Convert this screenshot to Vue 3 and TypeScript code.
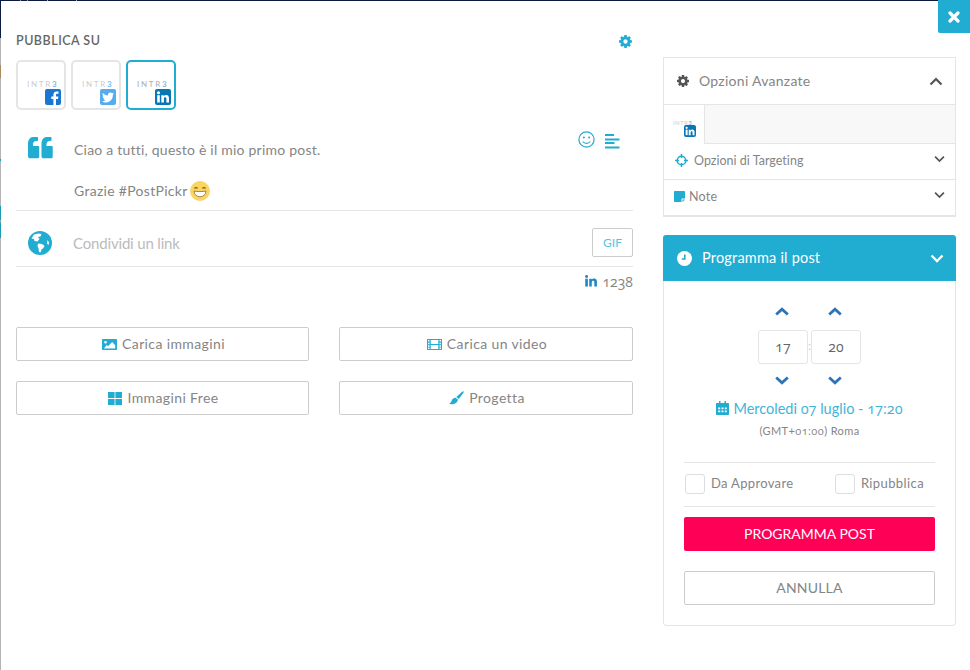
<script setup lang="ts">
const gear = 'M1152 896q0-106-75-181t-181-75-181 75-75 181 75 181 181 75 181-75 75-181zm512-109v222q0 12-8 23t-20 13l-185 28q-19 54-39 91 35 50 107 138 10 12 10 25t-9 23q-27 37-99 108t-94 71q-12 0-26-9l-138-108q-44 23-91 38-16 136-29 186-7 28-36 28h-222q-14 0-24.5-8.5t-11.5-21.5l-28-184q-49-16-90-37l-141 107q-10 9-25 9-14 0-25-11-126-114-165-168-7-10-7-23 0-12 8-23 15-21 51-66.5t54-70.5q-27-50-41-99l-183-27q-13-2-21-12.5t-8-23.5v-222q0-12 8-23t19-13l186-28q14-46 39-92-40-57-107-138-10-12-10-24 0-10 9-23 26-36 98.5-107.5t94.5-71.5q13 0 26 10l138 107q44-23 91-38 16-136 29-186 7-28 36-28h222q14 0 24.5 8.5t11.5 21.5l28 184q49 16 90 37l142-107q9-9 24-9 13 0 25 10 129 119 165 170 7 8 7 22 0 12-8 23-15 21-51 66.5t-54 70.5q26 50 41 98l183 28q13 2 21 12.5t8 23.5z'
const accounts = [
  { id: 'fb', active: false },
  { id: 'tw', active: false },
  { id: 'li', active: true },
]
const timeParts = ['17', '20']
</script>

<template>
  <div class="page">
    <div class="modal">
      <button class="close" aria-label="Chiudi">
        <svg width="12" height="12" viewBox="0 0 12 12"><path d="M2 2l8 8M10 2l-8 8" stroke="#fff" stroke-width="3.200" stroke-linecap="round" /></svg>
      </button>

      <section class="left">
        <div class="head">
          <span class="head-title">PUBBLICA SU</span>
          <svg width="15" height="15" viewBox="0 0 1792 1792"><path :d="gear" fill="#21acd2" /></svg>
        </div>

        <div class="accounts">
          <div v-for="a in accounts" :key="a.id" class="thumb" :class="{ on: a.active }">
            <span class="logo">INTR<b>3</b></span>
            <span class="badge" :class="a.id">
              <svg v-if="a.id === 'fb'" viewBox="0 0 16 16"><path d="M11 16V10h2l.4-2.500H11V6c0-.8.3-1.200 1.200-1.200h1.300V2.500c-.4 0-1.100-.1-1.900-.1-2 0-3.200 1.200-3.200 3.300v1.800H6.300V10h2.100v6z" fill="#fff" /></svg>
              <svg v-else-if="a.id === 'tw'" viewBox="0 0 16 16"><path d="M14 4.600c-.5.2-1 .3-1.400.4.5-.3.9-.8 1.100-1.400-.5.3-1 .5-1.600.6a2.500 2.500 0 0 0-4.200 2.300C5.900 6.400 4.100 5.400 2.900 3.900c-.7 1.200-.3 2.600.8 3.300-.4 0-.8-.1-1.100-.3 0 1.200.9 2.300 2 2.500-.4.100-.8.100-1.100 0 .3 1 1.200 1.700 2.300 1.700A5 5 0 0 1 2 12.200a7 7 0 0 0 10.800-6.300c.5-.3.9-.8 1.200-1.300z" fill="#fff" /></svg>
              <svg v-else viewBox="0 0 16 16"><rect x="2.200" y="6.200" width="2.600" height="7.300" fill="#fff" /><circle cx="3.500" cy="3.800" r="1.500" fill="#fff" /><path d="M6.300 6.200h2.500v1c.5-.8 1.300-1.200 2.300-1.200 2 0 2.900 1.200 2.900 3.300v4.200h-2.600V9.800c0-1-.4-1.600-1.200-1.600-.9 0-1.300.6-1.300 1.600v3.700H6.300z" fill="#fff" /></svg>
            </span>
          </div>
        </div>

        <div class="editor">
          <div class="quote-col">
            <svg width="25" height="22" viewBox="0 0 25 22"><path d="M5 0h4c.6 0 1 .4 1 1v2c0 .6-.4 1-1 1H8C6 4 5 5.300 5 7.500V9h5c.8 0 1.200.4 1.200 1.200v9.600c0 1-.4 1.400-1.200 1.400H2c-1 0-2-.6-2-1.800V7C0 3 2 0 5 0zM18.500 0h4c.6 0 1 .4 1 1v2c0 .6-.4 1-1 1h-1c-2 0-3 1.300-3 3.500V9h5c.8 0 1.200.4 1.200 1.200v9.600c0 1-.4 1.400-1.200 1.400h-8c-1 0-2-.6-2-1.800V7c0-4 2-7 5-7z" fill="#21acd2" /></svg>
          </div>
          <div class="post">
            <p class="greet">Ciao a tutti, questo è il mio primo post.</p>
            <p class="thanks">Grazie #PostPickr<svg class="emoji" width="20" height="20" viewBox="0 0 20 20"><circle cx="10" cy="10" r="10" fill="#fbd561" /><path d="M4 10c3.800.8 8.200.8 12 0-.2 3.600-2.800 5.800-6 5.800S4.200 13.600 4 10z" fill="#fff" stroke="#8a6a3a" stroke-width=".8" /><path d="M4.500 7.500c.7-1.300 2.300-1.300 3 0M12.500 7.500c.7-1.300 2.300-1.300 3 0" fill="none" stroke="#7a5b2a" stroke-width="1.200" /></svg></p>
          </div>
          <div class="tools">
            <svg width="17" height="17" viewBox="0 0 17 17"><circle cx="8.500" cy="8.500" r="7.600" fill="none" stroke="#21acd2" stroke-width="1.200" /><circle cx="5.900" cy="6.600" r="1" fill="#21acd2" /><circle cx="11.100" cy="6.600" r="1" fill="#21acd2" /><path d="M4.700 10.500c1.800 2.500 5.800 2.500 7.600 0" fill="none" stroke="#21acd2" stroke-width="1.100" /></svg>
            <svg class="align" width="15" height="15" viewBox="0 0 15 15"><path d="M0 1h9M0 5.500h14.500M0 9h9.500M0 13.500h14.500" stroke="#21acd2" stroke-width="2" /></svg>
          </div>
        </div>

        <div class="link-row">
          <svg class="globe" width="24" height="24" viewBox="0 0 24 24"><circle cx="12" cy="12" r="12" fill="#21acd2" /><path d="M6 3.500l4.500-1 3 .5-1 2.500-2.500.5 1.500 2-2 2.500-3-.5-.5-2-2.500-.5zM10 12.500l4 .5 2.500 2-1.500 2.500-1.500 1-1 3-1.500-.5-.5-3.500-1-2.500zM19.500 9l1.500 2.500-.5 2.500-1.500-1.500z" fill="#fff" /></svg>
          <span class="placeholder">Condividi un link</span>
          <button class="gif">GIF</button>
        </div>

        <div class="count">
          <svg width="12" height="12" viewBox="0 0 13 13"><rect x=".3" y="4" width="2.800" height="8.500" fill="#1d86c4" /><circle cx="1.700" cy="1.700" r="1.600" fill="#1d86c4" /><path d="M4.600 4h2.700v1.200C7.800 4.300 8.700 3.800 9.800 3.800c2.300 0 3.100 1.400 3.100 3.800v4.900H10.100V8.100c0-1.100-.4-1.800-1.300-1.800-1 0-1.500.7-1.500 1.800v4.400H4.600z" fill="#1d86c4" /></svg>
          <span class="num">1238</span>
        </div>

        <div class="actions">
          <button class="btn">
            <svg width="15" height="11" viewBox="0 0 15 11"><path fill-rule="evenodd" d="M1 0h13c.6 0 1 .4 1 1v9c0 .6-.4 1-1 1H1c-.6 0-1-.4-1-1V1c0-.6.4-1 1-1zm2.500 2A1.300 1.300 0 1 0 3.500 4.600 1.300 1.300 0 0 0 3.500 2zM2 9.500h11.200V6.200L10.200 3 6 7.300 4.600 5.900z" fill="#21acd2" /></svg>
            <span class="btn-text">Carica immagini</span>
          </button>
          <button class="btn">
            <svg width="15" height="11" viewBox="0 0 15 11"><path fill-rule="evenodd" d="M.5 0h14c.3 0 .5.200.5.500v10c0 .3-.2.500-.5.500H.5c-.3 0-.5-.2-.5-.5V.500C0 .2.200 0 .5 0zM1 1v1.500h1.500V1zm0 2.700v1.500h1.500V3.700zm0 2.600v1.500h1.500V6.300zM1 8.500V10h1.500V8.500zM12.500 1v1.500H14V1zm0 2.700v1.500H14V3.700zm0 2.600v1.500H14V6.300zm0 2.200V10H14V8.500zM3.700 1v4h7.600V1zm0 5v4h7.600V6z" fill="#21acd2" /></svg>
            <span class="btn-text">Carica un video</span>
          </button>
          <button class="btn">
            <svg width="14" height="13" viewBox="0 0 14 13"><path d="M0 0h6.600v6H0zM7.400 0H14v6H7.400zM0 6.900h6.600V13H0zM7.400 6.900H14V13H7.400z" fill="#21acd2" /></svg>
            <span class="btn-text">Immagini Free</span>
          </button>
          <button class="btn">
            <svg width="15" height="15" viewBox="0 0 15 15"><path d="M14.500.5c.4.300.3.900-.2 1.600L9.800 8 7.300 6 12.800.9c.6-.5 1.300-.7 1.700-.4zM6.700 6.800l2.300 1.900c-.5 2.600-3 4.300-5.300 4.500C2.300 13.400.8 13 .2 12.300c1.400-.2 2-1 2.300-2.200.4-1.700 2-3.200 4.200-3.300z" fill="#21acd2" /></svg>
            <span class="btn-text">Progetta</span>
          </button>
        </div>
      </section>

      <aside class="right">
        <div class="panel options">
          <div class="opt-head">
            <svg width="14" height="14" viewBox="0 0 1792 1792"><path :d="gear" fill="#555" /></svg>
            <span class="opt-title">Opzioni Avanzate</span>
            <svg class="chev-head" width="14" height="9" viewBox="0 0 14 9"><path d="M1.500 7.500L7 2l5.500 5.500" fill="none" stroke="#555" stroke-width="2.200" /></svg>
          </div>
          <div class="tabs">
            <div class="tab">
              <span class="logo tiny">INTR<b>3</b></span>
              <span class="badge li small">
                <svg viewBox="0 0 16 16"><rect x="2.200" y="6.200" width="2.600" height="7.300" fill="#fff" /><circle cx="3.500" cy="3.800" r="1.500" fill="#fff" /><path d="M6.300 6.200h2.500v1c.5-.8 1.300-1.200 2.300-1.200 2 0 2.900 1.200 2.900 3.300v4.200h-2.600V9.800c0-1-.4-1.600-1.200-1.600-.9 0-1.300.6-1.300 1.600v3.700H6.300z" fill="#fff" /></svg>
              </span>
            </div>
          </div>
          <div class="opt-row first">
            <svg width="13" height="13" viewBox="0 0 13 13"><circle cx="6.500" cy="6.500" r="4.300" fill="none" stroke="#21acd2" stroke-width="1.500" /><path d="M6.500 0v4M6.500 9v4M0 6.500h4M9 6.500h4" stroke="#21acd2" stroke-width="1.500" /></svg>
            <span>Opzioni di Targeting</span>
            <svg class="chev-row" width="11" height="8" viewBox="0 0 12 8"><path d="M1.200 1.500L6 6.200l4.800-4.700" fill="none" stroke="#555" stroke-width="1.900" /></svg>
          </div>
          <div class="opt-row note">
            <svg width="11" height="11" viewBox="0 0 11 11"><path d="M1 0h9c.6 0 1 .4 1 1v6.500H8.500c-.6 0-1 .4-1 1V11H1c-.6 0-1-.4-1-1V1c0-.6.4-1 1-1zM8.500 8.500H11L8.500 11z" fill="#21acd2" /></svg>
            <span>Note</span>
            <svg class="chev-row" width="11" height="8" viewBox="0 0 12 8"><path d="M1.200 1.500L6 6.200l4.800-4.700" fill="none" stroke="#555" stroke-width="1.900" /></svg>
          </div>
        </div>

        <div class="schedule">
          <div class="sched-head">
            <svg width="15" height="15" viewBox="0 0 15 15"><circle cx="7.500" cy="7.500" r="7.500" fill="#fff" /><path d="M7.800 3.500v4.500H4.800" fill="none" stroke="#21acd2" stroke-width="1.600" /></svg>
            <span class="sched-title">Programma il post</span>
            <svg class="chev-head" width="14" height="9" viewBox="0 0 14 9"><path d="M1.500 1.500L7 7l5.500-5.500" fill="none" stroke="#fff" stroke-width="2.400" /></svg>
          </div>
          <div class="sched-body">
            <div class="time">
              <template v-for="(t, i) in timeParts" :key="t">
                <span v-if="i === 1" class="colon">:</span>
                <div class="time-col">
                  <svg width="14" height="14" viewBox="0 0 14 14"><path d="M1.200 9.500L7 4.200l5.800 5.300" fill="none" stroke="#2e73b8" stroke-width="2.800" /></svg>
                  <div class="time-box"><span class="num">{{ t }}</span></div>
                  <svg width="14" height="14" viewBox="0 0 14 14"><path d="M1.200 4.500L7 9.800l5.800-5.300" fill="none" stroke="#2e73b8" stroke-width="2.800" /></svg>
                </div>
              </template>
            </div>
            <div class="date">
              <svg width="13" height="14" viewBox="0 0 13 14"><path fill-rule="evenodd" d="M3 0h1.500v2h4V0H10v2h2c.6 0 1 .4 1 1v10c0 .6-.4 1-1 1H1c-.6 0-1-.4-1-1V3c0-.6.4-1 1-1h2zM2.200 6.500v1.700h2V6.500zm3.300 0v1.700h2V6.500zm3.300 0v1.700h2V6.500zM2.200 9.500v1.700h2V9.500zm3.300 0v1.700h2V9.500zm3.300 0v1.700h2V9.500z" fill="#21acd2" /></svg>
              <span>Mercoledi <span class="num">07</span> luglio - <span class="num">17:20</span></span>
            </div>
            <div class="zone">(GMT+<span class="num">01:00</span>) Roma</div>
            <div class="checks">
              <label class="check"><span class="box"></span><span class="check-text">Da Approvare</span></label>
              <label class="check"><span class="box"></span><span class="check-text">Ripubblica</span></label>
            </div>
            <button class="primary">PROGRAMMA POST</button>
            <button class="cancel">ANNULLA</button>
          </div>
        </div>
      </aside>
    </div>
  </div>
</template>

<style>
html, body { margin: 0; background: #fff; }
</style>

<style scoped>
* { box-sizing: border-box; }
.page {
  width: 970px;
  height: 670px;
  overflow: hidden;
  padding: 1px 0 0 1px;
  font-family: Lato, "Open Sans", sans-serif;
  color: #666;
  background:
    linear-gradient(90deg, #0c1a40 0, #0c1a40 20px, #999 20px, #999 21px, #0c1a40 21px, #0c1a40 27px, #999 27px, #999 28px, #0c1a40 28px, #0c1a40 47px, #aaa 47px, #aaa 48px, #0c1a40 48px, #0c1a40 76px, #aaa 76px, #aaa 77px, #0c1a40 77px) top / 100% 1px no-repeat,
    linear-gradient(180deg, #0c1a40 0, #0c1a40 38px, #b4b4b4 38px, #b4b4b4 65px, #a98a5c 65px, #a98a5c 78px, #b4b4b4 78px, #b4b4b4 159px, #1a9bb0 159px, #1a9bb0 161px, #b4b4b4 161px, #b4b4b4 206px, #1a9bb0 206px, #1a9bb0 220px, #b4b4b4 220px, #1a9bb0 224px, #1a9bb0 238px, #b4b4b4 238px) left / 1px 100% no-repeat,
    #fff;
}
.num { font-family: "Open Sans", sans-serif; font-feature-settings: "onum" 1; font-variant-numeric: oldstyle-nums; }
.modal {
  position: relative;
  display: flex;
  gap: 30px;
  height: 669px;
  padding: 31px 0 0 15px;
  background: #fff;
}
.close {
  position: absolute;
  top: -1px;
  right: 0;
  width: 32px;
  height: 33px;
  border: 0;
  border-bottom-left-radius: 2px;
  background: #21acd2;
  display: flex;
  align-items: center;
  justify-content: center;
  padding: 0;
}
.left { width: 617px; }
.head {
  display: flex;
  align-items: center;
  justify-content: space-between;
  height: 18px;
  margin-bottom: 10px;
}
.head-title { font-size: 12.5px; font-weight: 600; color: #666; letter-spacing: 0.5px; margin-top: -2px; }
.accounts { display: flex; gap: 5px; }
.thumb {
  position: relative;
  width: 50px;
  height: 50px;
  border: 2px solid #e5e5e5;
  border-radius: 5px;
  background: #fff;
}
.thumb.on { border-color: #21acd2; }
.logo {
  position: absolute;
  left: 9px;
  top: 18px;
  font-size: 8px;
  line-height: 9px;
  letter-spacing: 1.7px;
  font-weight: 400;
  color: #c9cdd2;
  white-space: nowrap;
}
.logo b { color: #7fbde8; font-weight: 700; }
.thumb.on .logo { color: #a9aeb3; }
.logo.tiny { left: 9px; top: 14px; font-size: 6px; letter-spacing: 0.4px; line-height: 7px; }
.badge {
  position: absolute;
  right: 3px;
  bottom: 3px;
  width: 16px;
  height: 16px;
  border-radius: 2px;
  overflow: hidden;
  display: block;
}
.badge svg { display: block; width: 100%; height: 100%; }
.badge.fb { background: #1976d2; }
.badge.tw { background: #55acee; }
.badge.li { background: #0a77b5; }
.badge.small { width: 12px; height: 12px; right: 8px; bottom: 7px; }
.editor {
  display: flex;
  height: 101px;
  border-bottom: 1px solid #e5e5e5;
}
.quote-col { width: 58px; padding: 27px 0 0 12px; }
.post { flex: 1; padding-top: 30px; font-size: 14px; line-height: 20px; color: #858585; }
.post p { margin: 0; }
.greet { letter-spacing: 0.22px; }
.post .thanks { margin-top: 21px; display: flex; align-items: center; letter-spacing: 0.3px; }
.emoji { margin-left: 2px; }
.tools { display: flex; align-items: flex-start; gap: 10px; padding: 21px 13px 0 0; }
.align { margin-top: 3px; }
.link-row {
  display: flex;
  align-items: center;
  height: 56px;
  padding: 17px 0 9px;
  border-bottom: 1px solid #e5e5e5;
}
.globe { margin: 0 21px 0 12px; flex: none; }
.placeholder { flex: 1; font-size: 15px; color: #bbb; letter-spacing: -0.17px; }
.gif {
  width: 41px;
  height: 29px;
  border: 1px solid #ccc;
  border-radius: 2px;
  background: #fff;
  color: #55c4e0;
  font: 400 12px Lato, sans-serif;
  padding: 0;
}
.count {
  display: flex;
  align-items: center;
  justify-content: flex-end;
  gap: 5px;
  height: 30px;
  margin-bottom: 30px;
  padding-bottom: 2px;
  font-size: 14px;
  color: #858585;
}
.actions { display: grid; grid-template-columns: 293px 294px; gap: 20px 30px; }
.btn {
  display: flex;
  align-items: center;
  justify-content: center;
  gap: 5px;
  height: 34px;
  border: 1px solid #ccc;
  border-radius: 2px;
  background: #fff;
  color: #858585;
  font: 400 14px Lato, sans-serif;
  letter-spacing: 0.38px;
  padding: 0 0 0 2px;
}
.btn-text { margin-top: -2px; }
.right { width: 293px; margin-top: 25px; }
.panel { border: 1px solid #e5e5e5; }
.options { border-bottom-width: 2px; height: 160px; }
.opt-head {
  display: flex;
  align-items: center;
  height: 47px;
  padding: 0 12px 0 12px;
  border-bottom: 1px solid #e5e5e5;
}
.opt-title { margin-left: 9px; margin-top: -2px; font-size: 14px; color: #858585; letter-spacing: 0.28px; }
.chev-head { margin-left: auto; }
.tabs { height: 39px; background: #f8f8f8; border-bottom: 1px solid #e5e5e5; }
.tab {
  position: relative;
  width: 41px;
  height: 39px;
  background: #fff;
  border-right: 1px solid #e5e5e5;
}
.opt-row {
  display: flex;
  align-items: center;
  height: 35px;
  padding: 0 10px 2px;
  font-size: 12.5px;
  color: #858585;
}
.opt-row.first { height: 36px; border-bottom: 1px solid #e5e5e5; gap: 6px; padding-left: 11px; letter-spacing: 0.02px; }
.opt-row.note { gap: 4px; letter-spacing: 0.25px; }
.chev-row { margin-left: auto; margin-bottom: 3px; }
.schedule { margin-top: 18px; }
.sched-head {
  display: flex;
  align-items: center;
  height: 46px;
  padding: 0 12px 0 14px;
  background: #21acd2;
  border-radius: 3px 3px 0 0;
  color: #fff;
}
.sched-title { margin-left: 10px; margin-top: -2px; font-size: 14.5px; letter-spacing: 0.2px; }
.sched-body {
  height: 345px;
  padding: 24px 20px 0;
  border: 1px solid #e5e5e5;
  border-top: 0;
  border-radius: 0 0 4px 4px;
}
.time { display: flex; justify-content: center; }
.time-col { display: flex; flex-direction: column; align-items: center; gap: 11px; width: 50px; }
.time-col svg { margin-right: 2px; }
.time-col svg:last-child { margin-top: -2px; }
.time-box {
  width: 50px;
  height: 34px;
  padding-bottom: 2px;
  border: 1px solid #e5e5e5;
  border-radius: 3px;
  display: flex;
  align-items: center;
  justify-content: center;
  font-size: 14px;
  color: #666;
}
.colon { width: 3px; font-size: 12px; color: #ccc; align-self: center; text-align: center; line-height: 14px; }
.date {
  margin-top: 11px;
  height: 20px;
  display: flex;
  align-items: center;
  justify-content: center;
  gap: 4px;
  font-size: 14.5px;
  color: #3fb4d6;
  white-space: nowrap;
}
.zone {
  margin-top: 5px;
  height: 16px;
  line-height: 16px;
  text-align: center;
  font-size: 11px;
  color: #858585;
  letter-spacing: 0.4px;
}
.checks {
  display: flex;
  justify-content: space-between;
  align-items: center;
  height: 45px;
  margin-top: 23px;
  padding: 0 11px 1px 1px;
  border-top: 1px solid #e5e5e5;
  border-bottom: 1px solid #e5e5e5;
}
.check { display: flex; align-items: center; gap: 6px; font-size: 13px; color: #858585; letter-spacing: 0.33px; }
.check:last-child { letter-spacing: 0.4px; }
.check-text { margin-top: -2px; }
.box { width: 20px; height: 20px; border: 1px solid #ddd; border-radius: 3px; }
.primary, .cancel {
  display: block;
  width: 100%;
  height: 34px;
  border-radius: 2px;
  font: 400 14px Lato, sans-serif;
  padding: 0 0 2px;
}
.primary { margin-top: 10px; border: 0; background: #ff0057; color: #fff; }
.cancel { margin-top: 20px; border: 1px solid #ccc; background: #fff; color: #858585; letter-spacing: 0.2px; }
</style>
